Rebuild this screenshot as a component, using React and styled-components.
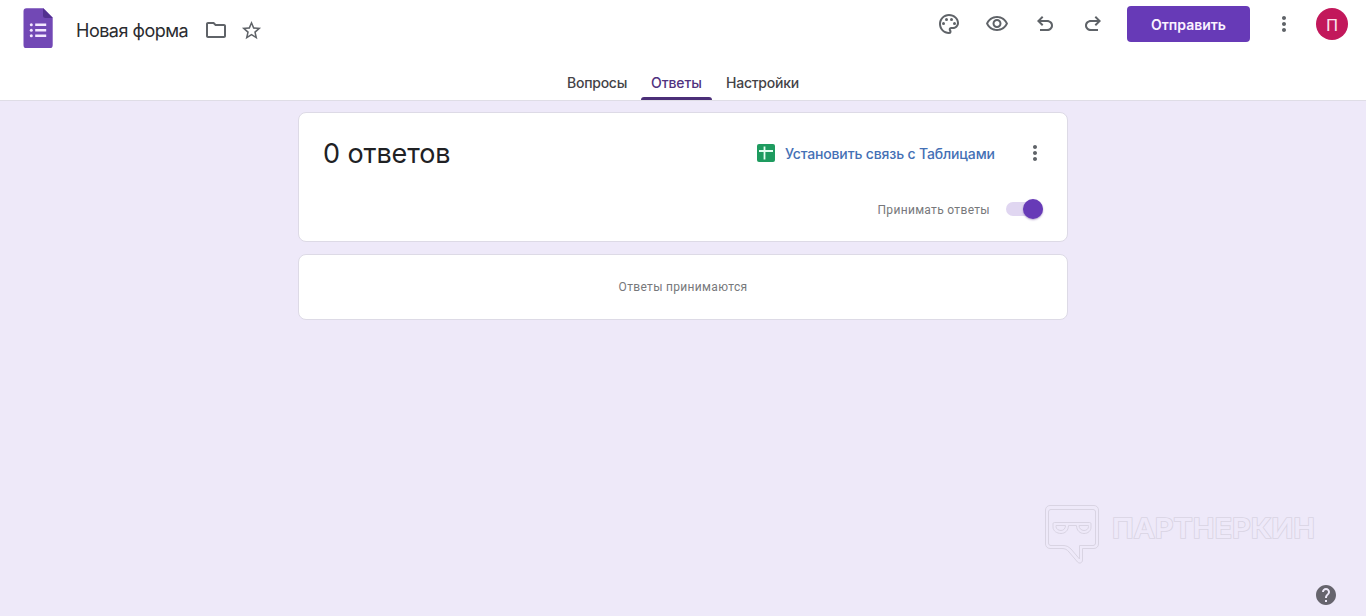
import React, { useState } from "react";
import styled, { createGlobalStyle } from "styled-components";

const GlobalStyle = createGlobalStyle`
  * {
    box-sizing: border-box;
  }

  body {
    margin: 0;
    background: #eee9f9;
    font-family: "Inter", "Liberation Sans", sans-serif;
  }

  button {
    padding: 0;
    border: 0;
    background: none;
    font: inherit;
    cursor: pointer;
  }
`;

const Page = styled.div`
  position: relative;
  height: 100vh;
  min-height: 616px;
  overflow: hidden;
`;

const Header = styled.header`
  display: flex;
  flex-direction: column;
  justify-content: space-between;
  height: 101px;
  background: #fff;
  border-bottom: 1px solid #dfdde6;
`;

const TopBar = styled.div`
  display: flex;
  justify-content: space-between;
  padding: 0 18px 0 23px;
`;

const TitleGroup = styled.div`
  display: flex;
  align-items: center;
  height: 60px;
`;

const Logo = styled.svg`
  display: block;
  width: 30px;
  height: 40px;
  margin: -4px 23px 0 0;
`;

const FormTitle = styled.h1`
  width: 128px;
  margin: 0;
  padding-top: 1px;
  color: #2b2c30;
  font-size: 18px;
  font-weight: 400;
  line-height: 24px;
  letter-spacing: -0.5px;
  white-space: nowrap;
`;

const Actions = styled.div`
  display: flex;
  align-items: center;
  height: 48px;
`;

const IconButton = styled.button`
  display: flex;
  align-items: center;
  justify-content: center;
  width: ${(p) => p.$width || 48}px;
  height: 36px;
  color: #5f6368;
`;

const SendButton = styled.button`
  width: 123px;
  height: 36px;
  margin: 0 10px;
  border-radius: 4px;
  background: #673ab7;
  color: #fbf3ff;
  font-size: 14px;
  font-weight: 600;
`;

const Avatar = styled.div`
  display: flex;
  align-items: center;
  justify-content: center;
  width: 32px;
  height: 32px;
  margin-left: 8px;
  padding-top: 2px;
  border-radius: 50%;
  background: #c2185b;
  color: #fbe3ee;
  font-family: "Roboto", sans-serif;
  font-size: 17px;
`;

const Tabs = styled.nav`
  display: flex;
  justify-content: center;
  gap: 24px;
`;

const Tab = styled.button`
  position: relative;
  width: ${(p) => p.$width}px;
  height: 36px;
  padding-top: 1px;
  color: ${(p) => (p.$active ? "#50327f" : "#444347")};
  font-size: 14px;
  font-weight: 500;
  line-height: 35px;
  letter-spacing: ${(p) => p.$spacing};
  text-align: left;
  white-space: nowrap;

  &::after {
    content: "";
    display: ${(p) => (p.$active ? "block" : "none")};
    position: absolute;
    right: -10px;
    bottom: 0;
    left: -10px;
    height: 3px;
    border-radius: 3px 3px 0 0;
    background: #4b2f78;
  }
`;

const Content = styled.main`
  display: flex;
  flex-direction: column;
  gap: 12px;
  width: 770px;
  margin: 11px auto 0;
`;

const Card = styled.section`
  background: #fff;
  border: 1px solid #dddae6;
  border-radius: 8px;
`;

const SummaryCard = styled(Card)`
  height: 130px;
`;

const NoticeCard = styled(Card)`
  display: flex;
  align-items: center;
  justify-content: center;
  height: 66px;
`;

const CardRow = styled.div`
  display: flex;
  align-items: center;
  justify-content: space-between;
  height: 80px;
  padding: 0 20px 0 24px;
`;

const Count = styled.h2`
  margin: 0;
  color: #202124;
  font-size: 27px;
  font-weight: 400;
  letter-spacing: -0.1px;
`;

const CardActions = styled.div`
  display: flex;
  align-items: center;
`;

const SheetsLink = styled.button`
  display: flex;
  align-items: center;
  gap: 10px;
  margin-right: 28px;
`;

const SheetsLabel = styled.span`
  width: 210px;
  color: #4470b5;
  font-size: 14px;
  font-weight: 500;
  letter-spacing: -0.15px;
  text-align: left;
  white-space: nowrap;
`;

const ToggleRow = styled.div`
  display: flex;
  align-items: center;
  justify-content: flex-end;
  gap: 16px;
  height: 32px;
  padding-right: 24px;
`;

const SmallText = styled.span`
  color: #77787b;
  font-family: "Roboto", sans-serif;
  font-size: 12px;
  line-height: 16px;
  letter-spacing: 0.32px;
`;

const ToggleLabel = styled(SmallText)`
  padding-top: 2px;
`;

const Track = styled.button`
  display: flex;
  align-items: center;
  justify-content: ${(p) => (p.$on ? "flex-end" : "flex-start")};
  width: 37px;
  height: 14px;
  border-radius: 7px;
  background: #e0d6f1;
`;

const Thumb = styled.span`
  width: 20px;
  height: 20px;
  border-radius: 50%;
  background: #673ab7;
  box-shadow: 0 1px 2px rgba(70, 30, 130, 0.4);
`;

const Watermark = styled.div`
  position: absolute;
  right: 50px;
  bottom: 51px;
  display: flex;
  gap: 12px;
`;

const WatermarkText = styled.span`
  width: 204px;
  padding-top: 6px;
  color: #eee9f9;
  font-size: 26.5px;
  font-weight: 600;
  line-height: 34px;
  white-space: nowrap;
  paint-order: stroke fill;
  -webkit-text-stroke: 1.6px #d9d4e3;
  transform: scaleX(1.097);
  transform-origin: left;
`;

const Help = styled.button`
  position: absolute;
  right: 28px;
  bottom: 9px;
  width: 24px;
  height: 24px;
  color: #66646d;
`;

const ICONS = {
  folder:
    "M9.17 6l2 2H20v10H4V6h5.17M10 4H4c-1.1 0-1.99.9-1.99 2L2 18c0 1.1.9 2 2 2h16c1.1 0 2-.9 2-2V8c0-1.1-.9-2-2-2h-8l-2-2z",
  star: "M22 9.24l-7.19-.62L12 2 9.19 8.63 2 9.24l5.46 4.73L5.82 21 12 17.27 18.18 21l-1.63-7.03L22 9.24zM12 15.4l-3.76 2.27 1-4.28-3.32-2.88 4.38-.38L12 6.1l1.71 4.04 4.38.38-3.32 2.88 1 4.28L12 15.4z",
  eye: "M12 6c3.79 0 7.17 2.13 8.82 5.5C19.17 14.87 15.79 17 12 17s-7.17-2.13-8.82-5.5C4.83 8.13 8.21 6 12 6m0-2C7 4 2.73 7.11 1 11.5 2.73 15.89 7 19 12 19s9.27-3.11 11-7.5C21.27 7.11 17 4 12 4zm0 5c1.38 0 2.5 1.12 2.5 2.5S13.38 14 12 14s-2.5-1.12-2.5-2.5S10.62 9 12 9m0-2c-2.48 0-4.5 2.02-4.5 4.5S9.52 16 12 16s4.5-2.02 4.5-4.5S14.48 7 12 7z",
  undo: "M7 19v-2h7.1c1.05 0 1.96-.33 2.74-1S18 14.5 18 13.5s-.39-1.83-1.16-2.5-1.69-1-2.74-1H7.8l2.6 2.6L9 14 4 9l5-5 1.4 1.4L7.8 8h6.3c1.62 0 3.01.53 4.16 1.58S20 11.93 20 13.5s-.58 2.88-1.74 3.93S15.72 19 14.1 19z",
  redo: "M17 19v-2H9.9c-1.05 0-1.96-.33-2.74-1S6 14.5 6 13.5s.39-1.83 1.16-2.5 1.69-1 2.74-1h6.3l-2.6 2.6L15 14l5-5-5-5-1.4 1.4L16.2 8H9.9c-1.62 0-3.01.53-4.16 1.58S4 11.93 4 13.5s.58 2.88 1.74 3.93S8.28 19 9.9 19z",
  more: "M12 8c1.1 0 2-.9 2-2s-.9-2-2-2-2 .9-2 2 .9 2 2 2zm0 2c-1.1 0-2 .9-2 2s.9 2 2 2 2-.9 2-2-.9-2-2-2zm0 6c-1.1 0-2 .9-2 2s.9 2 2 2 2-.9 2-2-.9-2-2-2z",
  help: "M12 2C6.48 2 2 6.48 2 12s4.48 10 10 10 10-4.48 10-10S17.52 2 12 2zm1 17h-2v-2h2v2zm2.07-7.75l-.9.92C13.45 12.9 13 13.5 13 15h-2v-.5c0-1.1.45-2.1 1.17-2.83l1.24-1.26c.37-.36.59-.86.59-1.41 0-1.1-.9-2-2-2s-2 .9-2 2H8c0-2.21 1.79-4 4-4s4 1.79 4 4c0 .88-.36 1.68-.93 2.25z",
};

function Icon({ name, size = 24 }) {
  return (
    <svg width={size} height={size} viewBox="0 0 24 24" fill="currentColor">
      <path d={ICONS[name]} />
    </svg>
  );
}

function PaletteIcon() {
  return (
    <svg width="24" height="24" viewBox="0 0 24 24" fill="currentColor">
      <path d="M12 22C6.49 22 2 17.51 2 12S6.49 2 12 2s10 4.04 10 9c0 3.31-2.69 6-6 6h-1.77c-.28 0-.5.22-.5.5 0 .12.05.23.13.33.41.47.64 1.06.64 1.67A2.5 2.5 0 0 1 12 22zm0-18c-4.41 0-8 3.59-8 8s3.59 8 8 8c.28 0 .5-.22.5-.5a.54.54 0 0 0-.14-.35c-.41-.46-.63-1.05-.63-1.65a2.5 2.5 0 0 1 2.5-2.5H16c2.21 0 4-1.79 4-4 0-3.86-3.59-7-8-7z" />
      <circle cx="6.5" cy="11.5" r="1.5" />
      <circle cx="9.5" cy="7.5" r="1.5" />
      <circle cx="14.5" cy="7.5" r="1.5" />
      <circle cx="17.5" cy="11.5" r="1.5" />
    </svg>
  );
}

function FormsLogo() {
  return (
    <Logo viewBox="0 0 30 40">
      <path
        d="M3.5 .3h17l9.2 9.2V37.300a3 3 0 0 1-3 3H3.500a3 3 0 0 1-3-3V3.300a3 3 0 0 1 3-3z"
        fill="#7248b5"
      />
      <path d="M20 .3l9.700 9.700h-7.200a2.500 2.500 0 0 1-2.500-2.500z" fill="#52308f" />
      <g fill="#f3e8ff">
        <circle cx="8.3" cy="16.7" r="1.5" />
        <circle cx="8.3" cy="22.2" r="1.5" />
        <circle cx="8.3" cy="27.7" r="1.5" />
        <path d="M12.2 15.4h11v2.5h-11zM12.2 21h11v2.5h-11zM12.2 26.500h11v2.500h-11z" />
      </g>
    </Logo>
  );
}

function SheetsIcon() {
  return (
    <svg width="18" height="18" viewBox="0 0 18 18">
      <rect width="18" height="18" rx="2" fill="#1e9b5f" />
      <path d="M2 7h14M7.5 2.5v13" stroke="#e4fff1" strokeWidth="1.8" />
    </svg>
  );
}

function WatermarkLogo() {
  return (
    <svg
      width="55"
      height="60"
      viewBox="0 0 55 60"
      fill="none"
      stroke="#d9d4e3"
      strokeWidth="1"
    >
      <path d="M5 .5h44A4.500 4.500 0 0 1 53.500 5v34a4.500 4.500 0 0 1-4.500 4.500H37.500V55c0 3-3 4-5 2l-8.500-10c-2-2.500-4-3.500-7-3.500H5A4.500 4.500 0 0 1 .5 39V5A4.500 4.500 0 0 1 5 .5z" />
      <path d="M6 4.500h42c1.500 0 2.500 1 2.500 2.500v31c0 1.500-1 2.500-2.500 2.500H34.500V54L26 44c-2.500-2.500-5-3.500-8-3.500H6c-1.500 0-2.500-1-2.500-2.500V7C3.500 5.500 4.500 4.500 6 4.500z" />
      <path d="M9.500 17.500h35c1 0 1.500.5 1.500 1.500v3c0 4-3 6.500-7 6.500s-7.500-3-7.500-8h-8c0 5-3.500 8-7.500 8s-8-2.500-8-6.500v-3c0-1 .5-1.500 1.500-1.500z" />
      <path d="M11 20.500h9.500c0 3-2 5-4.500 5s-5-1.500-5-4zM34 20.500h9.500v1c0 2.500-2 4-4.500 4s-5-2-5-5z" />
    </svg>
  );
}

const TABS = [
  { id: "questions", label: "Вопросы", width: 60, spacing: "-0.25px" },
  { id: "answers", label: "Ответы", width: 51, spacing: "-0.1px" },
  { id: "settings", label: "Настройки", width: 73, spacing: "-0.25px" },
];

function App() {
  const [tab, setTab] = useState("answers");
  const [accepting, setAccepting] = useState(true);

  return (
    <Page>
      <GlobalStyle />
      <Header>
        <TopBar>
          <TitleGroup>
            <FormsLogo />
            <FormTitle>Новая форма</FormTitle>
            <IconButton $width={24}>
              <Icon name="folder" />
            </IconButton>
            <IconButton $width={47}>
              <Icon name="star" size={23} />
            </IconButton>
          </TitleGroup>
          <Actions>
            <IconButton>
              <PaletteIcon />
            </IconButton>
            <IconButton>
              <Icon name="eye" />
            </IconButton>
            <IconButton>
              <Icon name="undo" />
            </IconButton>
            <IconButton>
              <Icon name="redo" />
            </IconButton>
            <SendButton>Отправить</SendButton>
            <IconButton>
              <Icon name="more" />
            </IconButton>
            <Avatar>П</Avatar>
          </Actions>
        </TopBar>
        <Tabs>
          {TABS.map((t) => (
            <Tab
              key={t.id}
              $active={tab === t.id}
              $width={t.width}
              $spacing={t.spacing}
              onClick={() => setTab(t.id)}
            >
              {t.label}
            </Tab>
          ))}
        </Tabs>
      </Header>

      <Content>
        <SummaryCard>
          <CardRow>
            <Count>0 ответов</Count>
            <CardActions>
              <SheetsLink>
                <SheetsIcon />
                <SheetsLabel>Установить связь с Таблицами</SheetsLabel>
              </SheetsLink>
              <IconButton $width={24}>
                <Icon name="more" />
              </IconButton>
            </CardActions>
          </CardRow>
          <ToggleRow>
            <ToggleLabel>Принимать ответы</ToggleLabel>
            <Track $on={accepting} onClick={() => setAccepting(!accepting)}>
              <Thumb />
            </Track>
          </ToggleRow>
        </SummaryCard>
        <NoticeCard>
          <SmallText>Ответы принимаются</SmallText>
        </NoticeCard>
      </Content>

      <Watermark>
        <WatermarkLogo />
        <WatermarkText>ПАРТНЕРКИН</WatermarkText>
      </Watermark>
      <Help>
        <Icon name="help" />
      </Help>
    </Page>
  );
}

export default App;
